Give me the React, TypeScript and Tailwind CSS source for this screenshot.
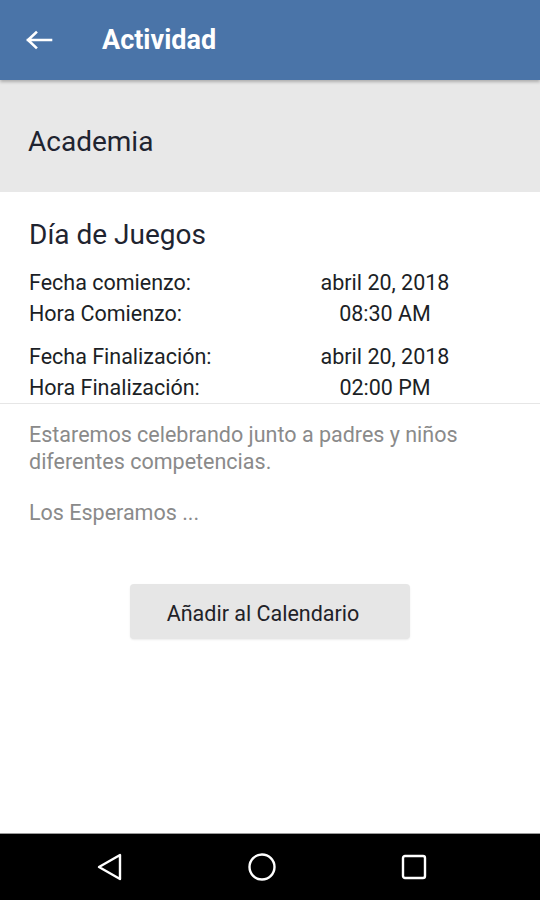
const rows = [
  [
    ['Fecha comienzo:', 'abril 20, 2018'],
    ['Hora Comienzo:', '08:30 AM'],
  ],
  [
    ['Fecha Finalización:', 'abril 20, 2018'],
    ['Hora Finalización:', '02:00 PM'],
  ],
]

export default function App() {
  return (
    <div className="w-[540px] h-[900px] flex flex-col bg-white font-['Roboto',sans-serif] overflow-hidden">
      {/* app bar */}
      <div className="h-20 shrink-0 bg-[#4a74a8] flex items-center shadow-[0_2px_3px_rgba(0,0,0,0.25)] z-10">
        <svg width="28" height="20" viewBox="0 0 28 20" className="ml-[25px]">
          <path d="M26 10 H3 M11 2.5 L3 10 L11 17.5" fill="none" stroke="#fff" strokeWidth="2.6" strokeLinecap="square" />
        </svg>
        <h1 className="ml-[49px] text-white text-[27px] font-bold">Actividad</h1>
      </div>

      {/* section */}
      <div className="h-[112px] shrink-0 bg-[#e8e8e8] flex items-center pl-[28px] pt-[12px]">
        <span className="text-[28px] text-[#1f2430]">Academia</span>
      </div>

      <div className="flex-1 flex flex-col">
        <div className="px-[29px] pt-[26px]">
          <h2 className="text-[28px] leading-[34px] text-[#1f2430]">Día de Juegos</h2>
          <div className="mt-[15px] flex flex-col gap-[12px]">
            {rows.map((group, i) => (
              <div key={i} className="flex flex-col">
                {group.map(([label, value]) => (
                  <div key={label} className="flex text-[21.5px] leading-[31px] text-[#1c1f26]">
                    <span className="w-[241px]">{label}</span>
                    <span className="w-[230px] text-center">{value}</span>
                  </div>
                ))}
              </div>
            ))}
          </div>
        </div>
        <div className="h-px bg-[#e6e6e6]" />

        <div className="px-[29px] pt-[17px] text-[21.5px] leading-[27px] text-[#8a8a8a]">
          <p>Estaremos celebrando junto a padres y niños diferentes competencias.</p>
          <p className="mt-[24px]">Los Esperamos ...</p>
        </div>

        <div className="flex justify-center mt-[58px]">
          <button className="w-[280px] h-[55px] pr-[14px] pt-[5px] rounded-[4px] bg-[#e6e6e6] text-[21.5px] text-[#1f2228] shadow-[0_1px_2px_rgba(0,0,0,0.08)]">
            Añadir al Calendario
          </button>
        </div>
      </div>

      {/* nav bar */}
      <div className="h-[67px] shrink-0 bg-black border-t border-[#9a9a9a] flex items-center justify-center gap-[122px] pr-[16px]">
        <svg width="30" height="30" viewBox="0 0 30 30">
          <path d="M25 3 L25 27 L4 15 Z" fill="none" stroke="#fff" strokeWidth="2.4" strokeLinejoin="round" />
        </svg>
        <svg width="30" height="30" viewBox="0 0 30 30">
          <circle cx="15" cy="15" r="12.5" fill="none" stroke="#fff" strokeWidth="2.4" />
        </svg>
        <svg width="30" height="30" viewBox="0 0 30 30">
          <rect x="4" y="4" width="22" height="22" rx="2" fill="none" stroke="#fff" strokeWidth="2.4" />
        </svg>
      </div>
    </div>
  )
}
